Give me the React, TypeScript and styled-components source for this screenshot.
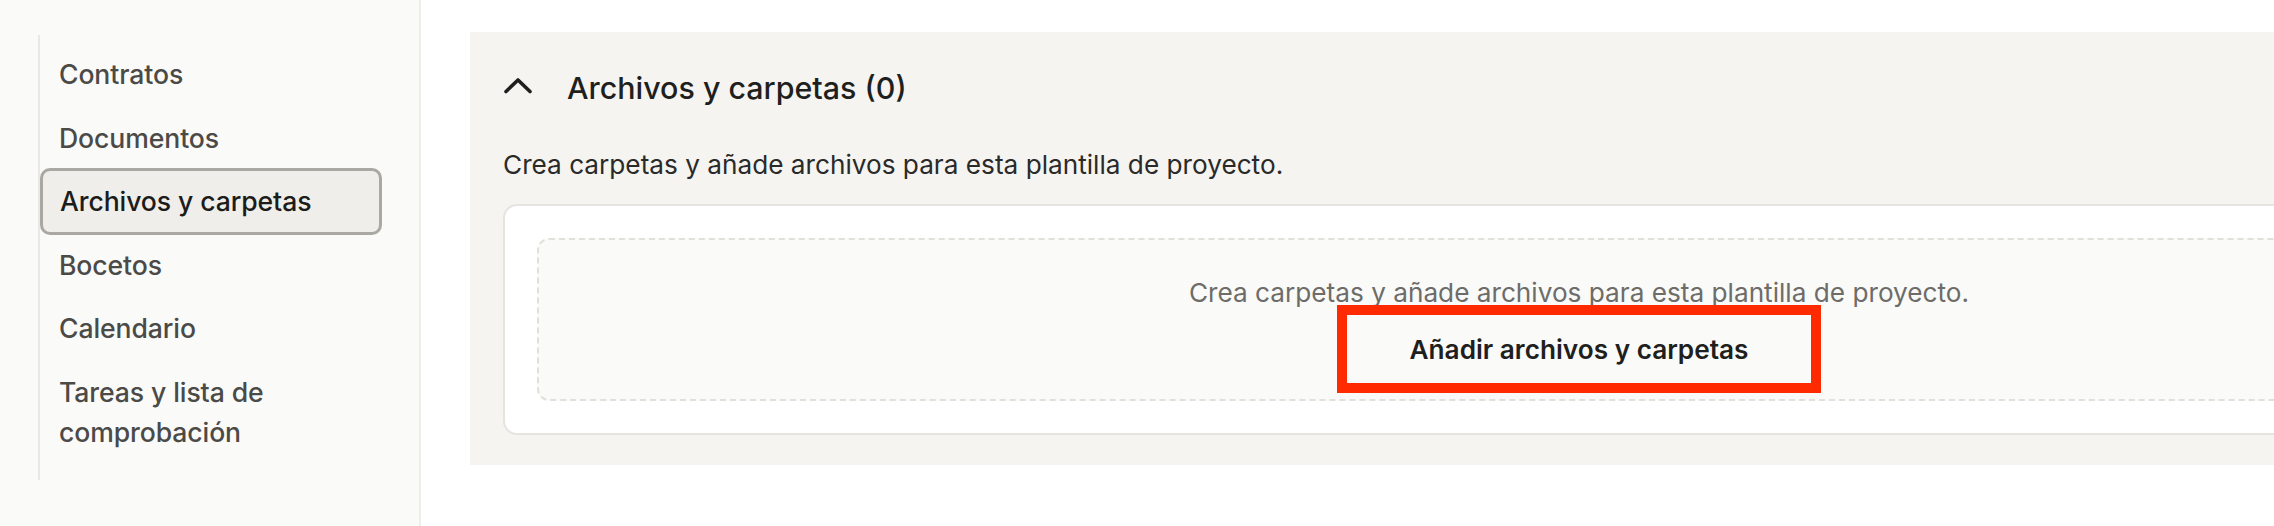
import React from "react";
import styled, { createGlobalStyle } from "styled-components";

const GlobalStyle = createGlobalStyle`
  html, body {
    margin: 0;
    padding: 0;
    background: #ffffff;
    overflow: hidden;
  }
  body {
    font-family: "Inter", "Noto Sans", sans-serif;
    color: #1f1f1d;
  }
`;

const navItems = [
  "Contratos",
  "Documentos",
  "Archivos y carpetas",
  "Bocetos",
  "Calendario",
  "Tareas y lista de comprobación",
];

const ACTIVE = "Archivos y carpetas";
const HELP_TEXT = "Crea carpetas y añade archivos para esta plantilla de proyecto.";

const ChevronUp = () => (
  <svg width="28" height="18" viewBox="0 0 28 18" fill="none">
    <polyline
      points="2,15.5 14,4 26,15.5"
      stroke="#1f1f1d"
      strokeWidth="3.6"
      strokeLinecap="round"
      strokeLinejoin="round"
    />
  </svg>
);

export default function App() {
  return (
    <>
      <GlobalStyle />
      <Page>
        <Sidebar>
          <NavList>
            {navItems.map((item) => (
              <NavItem key={item} active={item === ACTIVE}>
                {item}
              </NavItem>
            ))}
          </NavList>
        </Sidebar>
        <Main>
          <Panel>
            <PanelHeader>
              <ToggleButton aria-label="Contraer">
                <ChevronUp />
              </ToggleButton>
              <Title>Archivos y carpetas (0)</Title>
            </PanelHeader>
            <Description>{HELP_TEXT}</Description>
            <Card>
              <DropZone>
                <EmptyText>{HELP_TEXT}</EmptyText>
                <AddButton>Añadir archivos y carpetas</AddButton>
              </DropZone>
            </Card>
          </Panel>
        </Main>
      </Page>
    </>
  );
}

const Page = styled.div`
  display: flex;
  align-items: stretch;
  min-height: 526px;
  width: 2800px;
`;

const Sidebar = styled.aside`
  flex: 0 0 421px;
  background: #fafaf9;
  border-right: 2px solid #efeeeb;
  padding: 35px 0 0 38px;
  box-sizing: border-box;
`;

const NavList = styled.ul`
  list-style: none;
  margin: 0;
  padding: 7.5px 0 16px 0;
  width: 345px;
  border-left: 2px solid #e9e8e4;
`;

const NavItem = styled.li<{ active: boolean }>`
  font-size: 26.6px;
  line-height: 40px;
  font-weight: 500;
  letter-spacing: -0.1px;
  color: ${(p) => (p.active ? "#1c1c1a" : "#4b4a47")};
  margin: ${(p) => (p.active ? "-2px 0" : "0")};
  padding: ${(p) =>
    p.active ? "10.75px 20px 10.75px 17px" : "11.75px 20px 11.75px 19px"};
  background: ${(p) => (p.active ? "#efeeea" : "transparent")};
  border: ${(p) => (p.active ? "3px solid #a9a8a2" : "none")};
  border-radius: 10px;
  box-sizing: border-box;
  width: 342px;
  cursor: pointer;
`;

const Main = styled.main`
  flex: 0 0 auto;
  padding: 32px 49px 62px 49px;
`;

const Panel = styled.section`
  width: 2218px;
  box-sizing: border-box;
  background: #f5f4f1;
  padding: 32px 33px 30px 33px;
`;

const PanelHeader = styled.div`
  display: flex;
  align-items: center;
  gap: 34px;
  height: 48px;
`;

const ToggleButton = styled.button`
  display: flex;
  align-items: center;
  justify-content: center;
  width: 30px;
  height: 30px;
  padding: 0;
  margin-top: -6px;
  border: none;
  background: none;
  cursor: pointer;
`;

const Title = styled.h2`
  margin: 0;
  font-size: 30.4px;
  line-height: 48px;
  font-weight: 500;
  color: #1f1f1d;
`;

const Description = styled.p`
  margin: 35px 0 21px 0;
  font-size: 26.2px;
  line-height: 36px;
  color: #2a2a28;
`;

const Card = styled.div`
  background: #ffffff;
  border: 2px solid #e6e4df;
  border-radius: 14px;
  padding: 32px;
`;

const DropZone = styled.div`
  display: flex;
  flex-direction: column;
  align-items: center;
  background: #fafaf9;
  border: 2px dashed #e2e0db;
  border-radius: 12px;
  padding: 35px 0 6px 0;
`;

const EmptyText = styled.p`
  margin: 0;
  font-size: 26.2px;
  line-height: 36px;
  color: #6d6c68;
`;

const AddButton = styled.button`
  margin-top: -6px;
  width: 484px;
  height: 88px;
  box-sizing: border-box;
  border: 10px solid #ff2a00;
  background: transparent;
  font-family: inherit;
  font-size: 26.2px;
  font-weight: 600;
  color: #1f1f1d;
  cursor: pointer;
`;
